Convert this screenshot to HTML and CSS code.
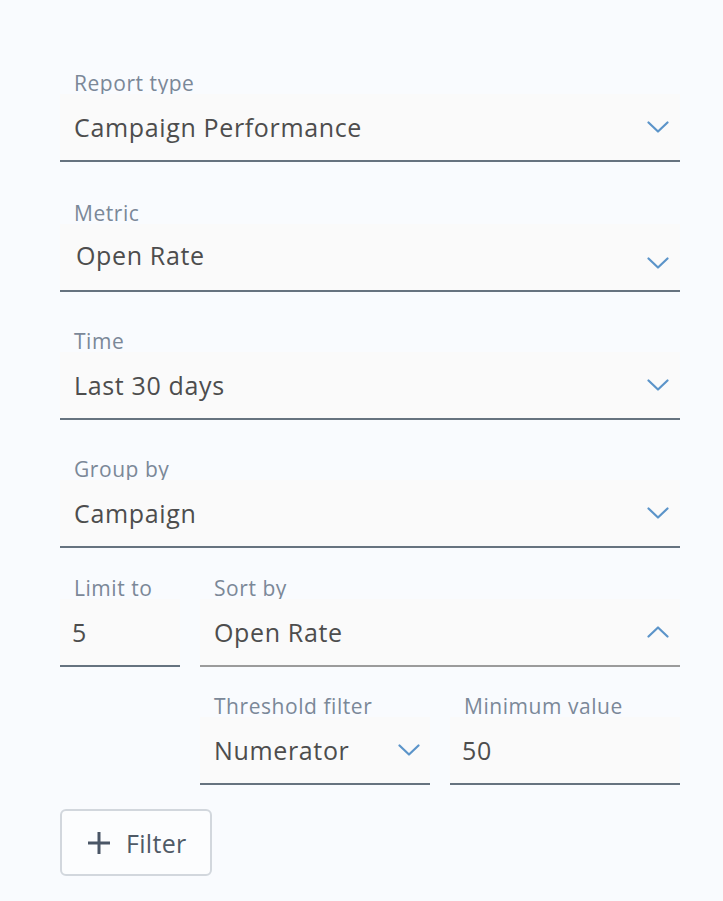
FILE: index.html
```html
<!DOCTYPE html>
<html lang="en">
<head>
<meta charset="utf-8">
<title>Report settings</title>
<link rel="stylesheet" href="styles.css">
</head>
<body>
<div class="form">
  <div class="group">
    <div class="label">Report type</div>
    <div class="field">
      <span class="value">Campaign Performance</span>
      <svg class="chev" viewBox="0 0 22 12" width="22" height="12"><polyline points="1.5,1.5 11,10.5 20.5,1.5"/></svg>
    </div>
  </div>
  <div class="group group-metric">
    <div class="label">Metric</div>
    <div class="field field-metric">
      <span class="value">Open Rate</span>
      <svg class="chev" viewBox="0 0 22 12" width="22" height="12"><polyline points="1.5,1.5 11,10.5 20.5,1.5"/></svg>
    </div>
  </div>
  <div class="group">
    <div class="label">Time</div>
    <div class="field">
      <span class="value">Last 30 days</span>
      <svg class="chev" viewBox="0 0 22 12" width="22" height="12"><polyline points="1.5,1.5 11,10.5 20.5,1.5"/></svg>
    </div>
  </div>
  <div class="group group-last">
    <div class="label">Group by</div>
    <div class="field">
      <span class="value">Campaign</span>
      <svg class="chev" viewBox="0 0 22 12" width="22" height="12"><polyline points="1.5,1.5 11,10.5 20.5,1.5"/></svg>
    </div>
  </div>
  <div class="row row-sort">
    <div class="group group-limit">
      <div class="label">Limit to</div>
      <div class="field field-input">
        <span class="value">5</span>
      </div>
    </div>
    <div class="group group-grow">
      <div class="label">Sort by</div>
      <div class="field field-open">
        <span class="value">Open Rate</span>
        <svg class="chev" viewBox="0 0 22 12" width="22" height="12"><polyline points="1.5,10.5 11,1.5 20.5,10.5"/></svg>
      </div>
    </div>
  </div>
  <div class="row row-threshold">
    <div class="group group-half">
      <div class="label">Threshold filter</div>
      <div class="field field-small">
        <span class="value">Numerator</span>
        <svg class="chev" viewBox="0 0 22 12" width="22" height="12"><polyline points="1.5,1.5 11,10.5 20.5,1.5"/></svg>
      </div>
    </div>
    <div class="group group-half">
      <div class="label">Minimum value</div>
      <div class="field field-input">
        <span class="value">50</span>
      </div>
    </div>
  </div>
  <button class="btn-filter" type="button">
    <svg class="plus" viewBox="0 0 24 24" width="24" height="24"><path d="M12 1V23M1 12H23"/></svg>
    <span>Filter</span>
  </button>
</div>
</body>
</html>
```

FILE: styles.css
```css
html, body {
  margin: 0;
  padding: 0;
}

body {
  background: #f9fbfe;
  font-family: "Open Sans", "Lato", sans-serif;
  width: 723px;
  height: 901px;
  overflow: hidden;
}

.form {
  display: flex;
  flex-direction: column;
  padding: 68px 43px 0 60px;
}

.group {
  display: flex;
  flex-direction: column;
  margin-bottom: 34px;
}

.group-metric {
  margin-top: 2px;
}

.group-last {
  margin-bottom: 25px;
}

.label {
  height: 26px;
  line-height: 30px;
  font-size: 21px;
  letter-spacing: 0.55px;
  color: #7b8898;
  padding-left: 14px;
  white-space: nowrap;
}

.field {
  height: 66px;
  background: #fafafa;
  border-bottom: 2px solid #66737f;
  display: flex;
  align-items: center;
  justify-content: space-between;
  padding: 0 11px 0 14px;
}

.value {
  font-size: 25px;
  letter-spacing: 0.65px;
  color: #4d4d4d;
  white-space: nowrap;
}

.chev {
  flex: none;
  fill: none;
  stroke: #5b94c9;
  stroke-width: 2.2;
  stroke-linecap: round;
  stroke-linejoin: round;
}

.field-metric {
  padding-left: 16px;
}

.field-metric .value {
  margin-top: -4px;
}

.field-metric .chev {
  margin-top: 12px;
}

.row {
  display: flex;
  gap: 20px;
}

.row .group {
  margin-bottom: 24px;
}

.row-threshold {
  padding-left: 140px;
}

.group-limit {
  width: 120px;
}

.group-grow {
  flex: 1;
}

.group-half {
  flex: 1;
}

.field-input {
  padding-left: 12px;
}

.field-open {
  border-bottom-color: #9b9b9b;
}

.field-small {
  padding-right: 10px;
}

.btn-filter {
  align-self: flex-start;
  width: 152px;
  height: 67px;
  background: #fcfdfe;
  border: 2px solid #d2d7dd;
  border-radius: 6px;
  display: flex;
  align-items: center;
  gap: 15px;
  padding: 0 0 0 25px;
  font-family: "Open Sans", "Lato", sans-serif;
  font-size: 25px;
  letter-spacing: 0.3px;
  color: #4f5a66;
  cursor: pointer;
}

.plus {
  flex: none;
  fill: none;
  stroke: #4a5666;
  stroke-width: 3;
}
```
